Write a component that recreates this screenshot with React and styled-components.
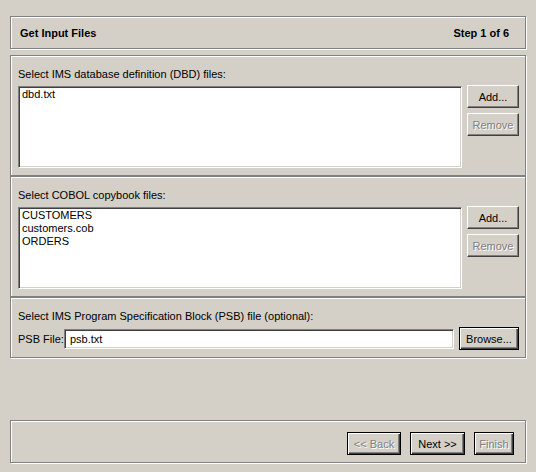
import React, { useState } from "react";
import styled, { createGlobalStyle, css } from "styled-components";

const GlobalStyle = createGlobalStyle`
  html, body {
    margin: 0;
    padding: 0;
    background: #d4d0c8;
  }
  body {
    font-family: "Liberation Sans", Arial, sans-serif;
    font-size: 11px;
    color: #000;
  }
`;

const Wizard = styled.div`
  width: 536px;
  height: 472px;
  box-sizing: border-box;
  padding: 16px 10px 0 10px;
  display: flex;
  flex-direction: column;
  background: #d4d0c8;
`;

const etched = css`
  border: 1px solid #808080;
  box-shadow: inset 1px 1px #fff, 1px 1px #fff;
`;

const Header = styled.div`
  ${etched};
  height: 33px;
  box-sizing: border-box;
  display: flex;
  align-items: center;
  justify-content: space-between;
  padding: 1px 16px 0 9px;
  font-weight: bold;
  margin-bottom: 6px;
`;

const Panel = styled.div`
  ${etched};
  padding: 12px 6px 7px 7px;
  display: flex;
  flex-direction: column;
`;

const Label = styled.div`
  line-height: 13px;
  height: 13px;
  margin-bottom: ${(p) => p.$gap || 5}px;
  white-space: nowrap;
`;

const Row = styled.div`
  display: flex;
  align-items: ${(p) => p.$align || "flex-start"};
  gap: 5px;
`;

const sunken = css`
  box-sizing: border-box;
  background: #fff;
  border: 1px solid;
  border-color: #808080 #fff #fff #808080;
  box-shadow: inset 1px 1px #404040, inset -1px -1px #d4d0c8;
`;

const ListBox = styled.div`
  ${sunken};
  flex: 1;
  height: 82px;
  padding: 1px 2px;
`;

const ListItem = styled.div`
  line-height: 13px;
  padding-left: 1px;
  white-space: nowrap;
  cursor: default;
  background: ${(p) => (p.$selected ? "#0a246a" : "transparent")};
  color: ${(p) => (p.$selected ? "#fff" : "#000")};
`;

const ButtonColumn = styled.div`
  width: 52px;
  display: flex;
  flex-direction: column;
  gap: 5px;
  margin-top: -1px;
`;

const Button = styled.button`
  box-sizing: border-box;
  width: ${(p) => p.$width || 52}px;
  height: 23px;
  padding: 0;
  margin: 0;
  font-family: "Liberation Sans", Arial, sans-serif;
  font-size: 11px;
  color: ${(p) => (p.disabled ? "#808080" : "#000")};
  text-shadow: ${(p) => (p.disabled ? "1px 1px #fff" : "none")};
  background: #d4d0c8;
  border: 1px solid;
  border-color: ${(p) =>
    p.$default ? "#000" : "#fff #404040 #404040 #fff"};
  box-shadow: ${(p) =>
    p.$default
      ? "inset 1px 1px #fff, inset -1px -1px #404040, inset -2px -2px #808080"
      : "inset -1px -1px #808080"};
  outline: none;
  cursor: default;
`;

const FieldLabel = styled.span`
  width: 41px;
  white-space: nowrap;
`;

const TextField = styled.input`
  ${sunken};
  flex: 1;
  height: 20px;
  padding: 0 5px;
  font-family: "Liberation Sans", Arial, sans-serif;
  font-size: 11px;
  outline: none;
`;

const Footer = styled.div`
  ${etched};
  margin-top: auto;
  margin-bottom: 9px;
  height: 43px;
  box-sizing: border-box;
  display: flex;
  justify-content: flex-end;
  align-items: flex-start;
  gap: 9px;
  padding: 11px 11px 0 0;
`;

function FileListPanel({ title, files }) {
  const [selected, setSelected] = useState(null);
  return (
    <Panel>
      <Label>{title}</Label>
      <Row>
        <ListBox>
          {files.map((f) => (
            <ListItem
              key={f}
              $selected={selected === f}
              onClick={() => setSelected(f)}
            >
              {f}
            </ListItem>
          ))}
        </ListBox>
        <ButtonColumn>
          <Button>Add...</Button>
          <Button disabled={selected === null}>Remove</Button>
        </ButtonColumn>
      </Row>
    </Panel>
  );
}

export default function App() {
  const [psb, setPsb] = useState("psb.txt");
  return (
    <>
      <GlobalStyle />
      <Wizard>
        <Header>
          <span>Get Input Files</span>
          <span>Step 1 of 6</span>
        </Header>
        <FileListPanel
          title="Select IMS database definition (DBD) files:"
          files={["dbd.txt"]}
        />
        <FileListPanel
          title="Select COBOL copybook files:"
          files={["CUSTOMERS", "customers.cob", "ORDERS"]}
        />
        <Panel>
          <Label $gap={4}>
            Select IMS Program Specification Block (PSB) file (optional):
          </Label>
          <Row $align="center">
            <FieldLabel>PSB File:</FieldLabel>
            <TextField value={psb} onChange={(e) => setPsb(e.target.value)} />
            <Button $default $width={60}>
              Browse...
            </Button>
          </Row>
        </Panel>
        <Footer>
          <Button $default $width={54} disabled>
            &lt;&lt; Back
          </Button>
          <Button $default $width={55}>
            Next &gt;&gt;
          </Button>
          <Button $default $width={40} disabled>
            Finish
          </Button>
        </Footer>
      </Wizard>
    </>
  );
}
